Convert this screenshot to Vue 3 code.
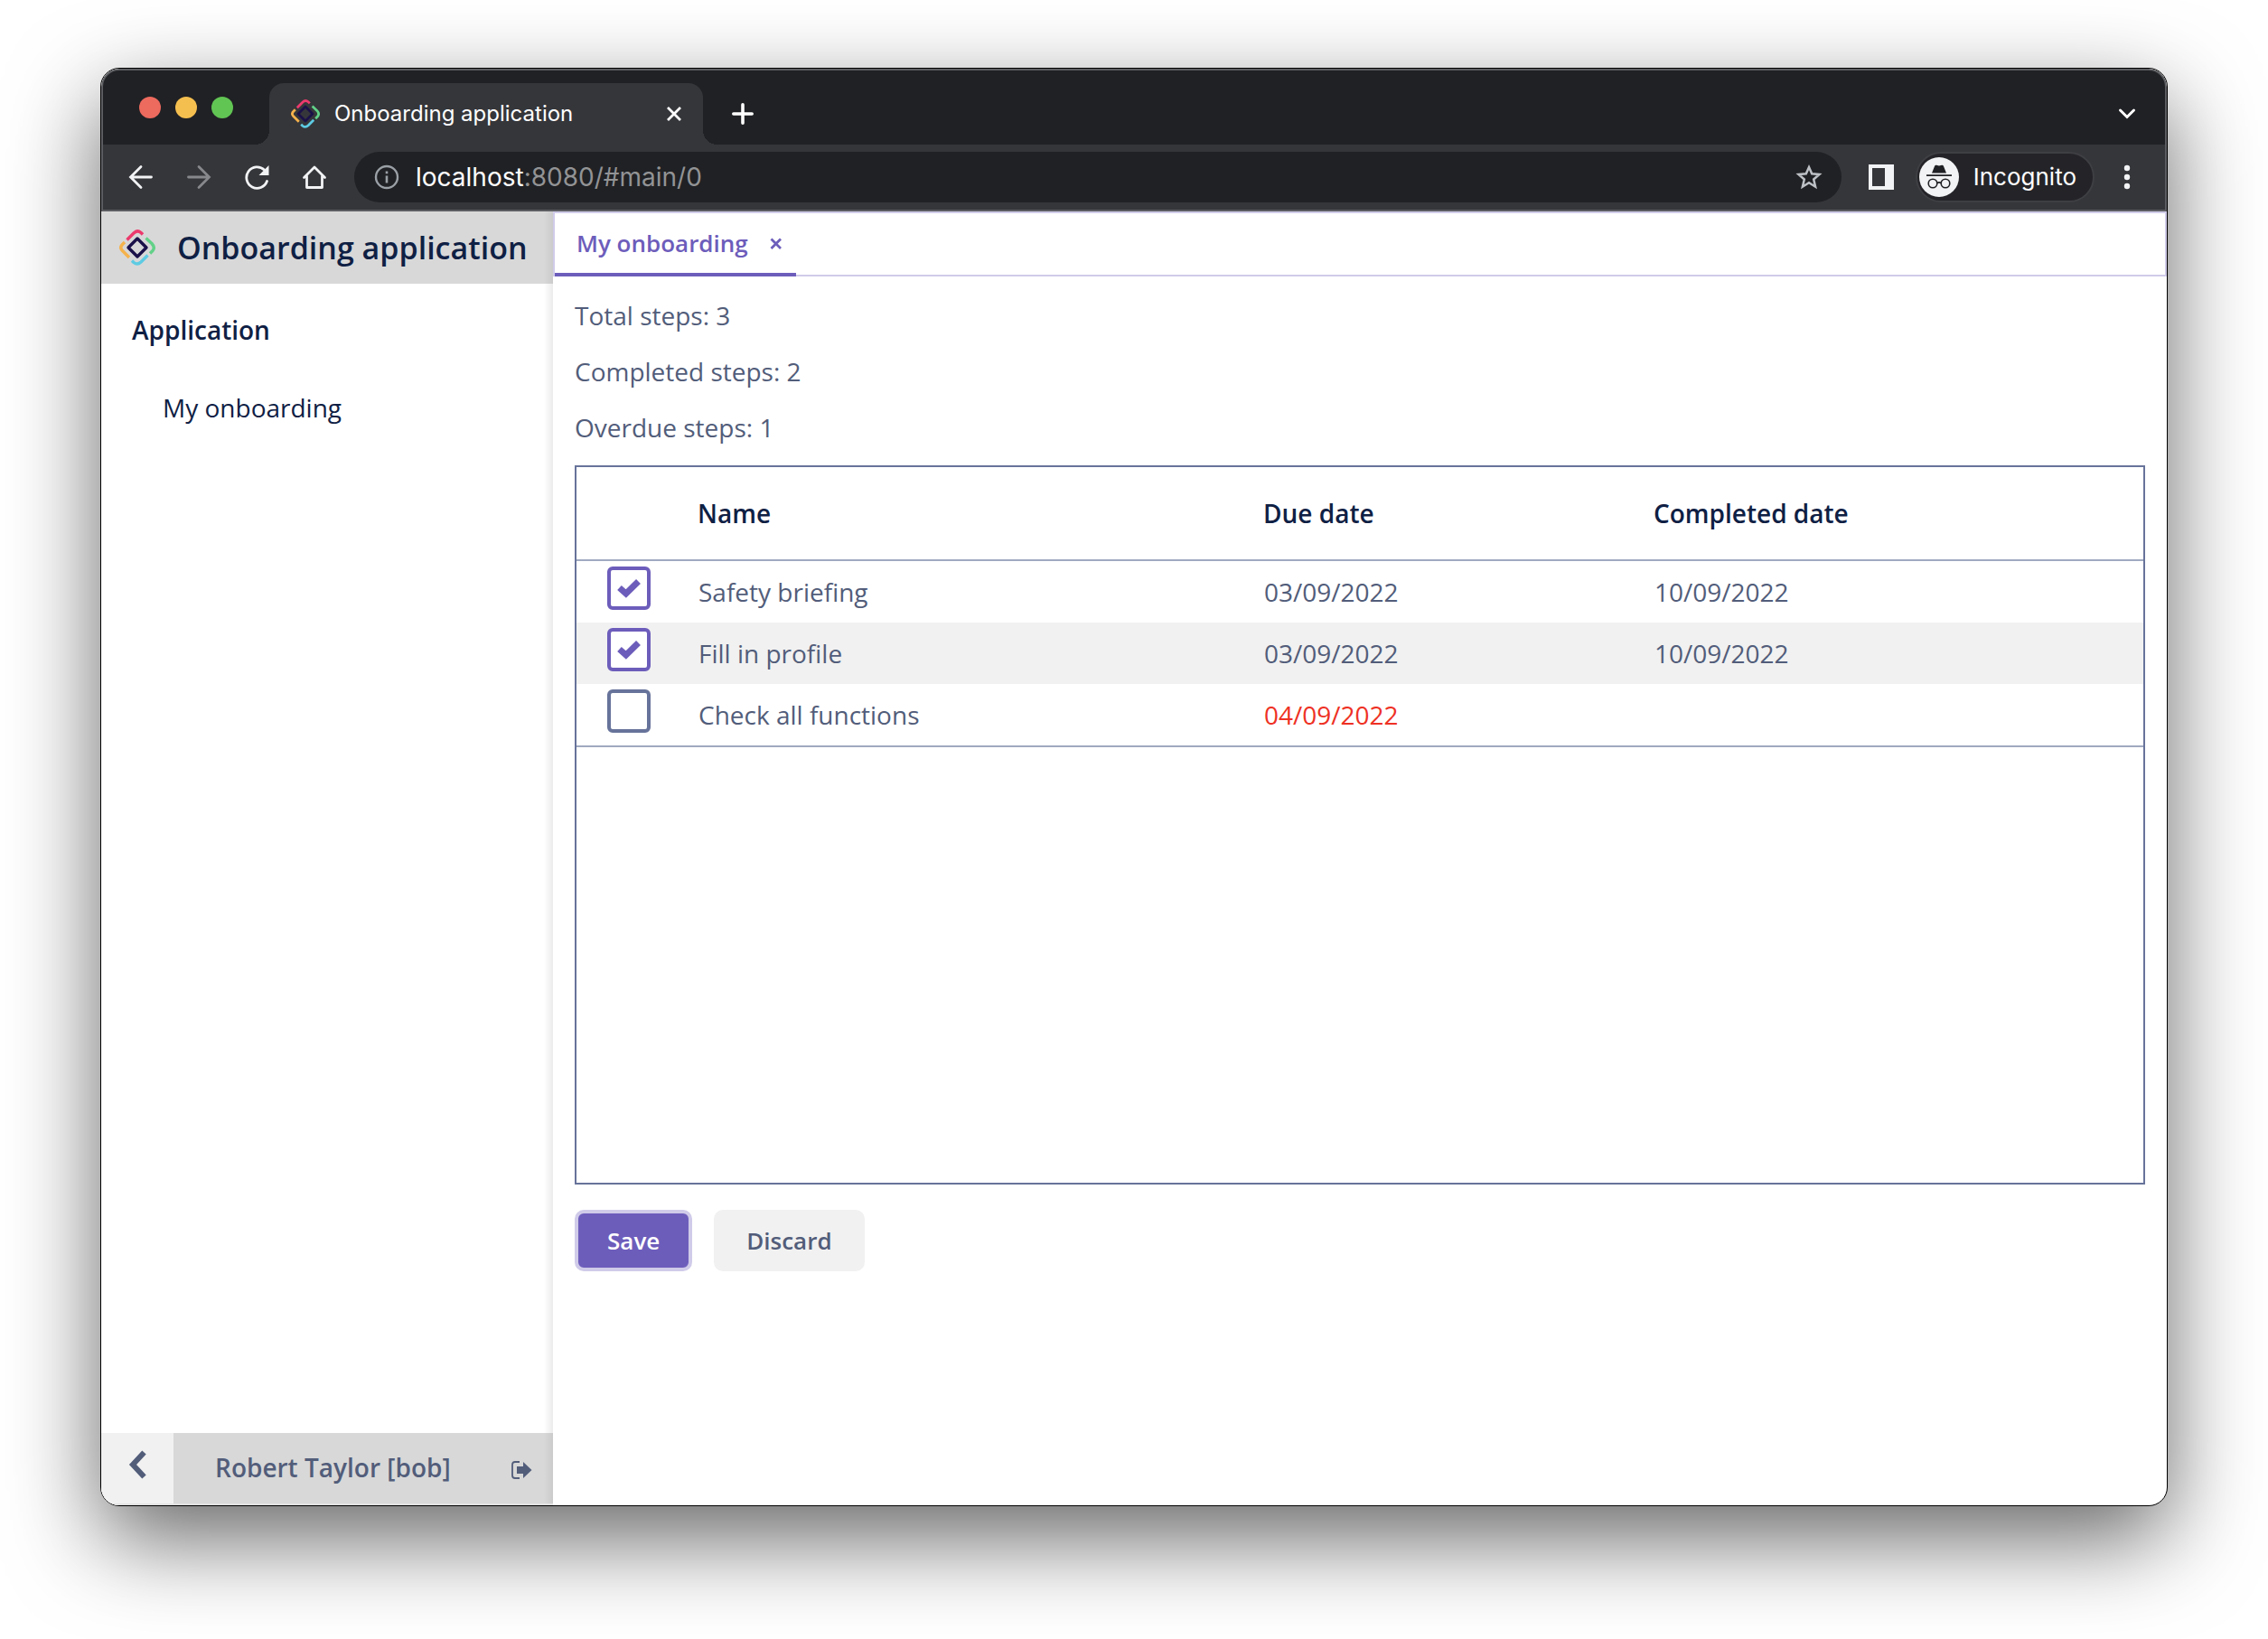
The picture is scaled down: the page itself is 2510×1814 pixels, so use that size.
<script setup>
import { ref } from 'vue'

const steps = ref([
  { name: 'Safety briefing', due: '03/09/2022', completed: '10/09/2022', done: true },
  { name: 'Fill in profile', due: '03/09/2022', completed: '10/09/2022', done: true },
  { name: 'Check all functions', due: '04/09/2022', completed: '', done: false, overdue: true },
])

// Strokes of the application logo, used in the browser tab and in the sidebar.
const logoStrokes = [
  { color: '#ec3a6d', d: 'M8.5 11.5 L16 4 Q20 0 24 3.5 L26 5.5' },
  { color: '#62d188', d: 'M29.5 9.5 L36 15.5 Q40 20 37 23.5 L34 26.5' },
  { color: '#5dcbe3', d: 'M31.5 28.5 L24 36 Q20 39.800 16 36.500 L14 34.5' },
  { color: '#f5b24c', d: 'M6 14 L3.5 16.5 Q0 20 3.500 23.500 L11 31' },
  { color: '#1b1149', d: 'M20 10 L30 20 L20 30 L10 20 Z' },
]
</script>

<template>
  <div class="desktop">
    <div class="window">
      <header class="chrome">
        <div class="tabstrip">
          <div class="lights">
            <span class="light red"></span>
            <span class="light yellow"></span>
            <span class="light green"></span>
          </div>
          <div class="browser-tab">
            <svg class="favicon" viewBox="0 0 40 40" aria-hidden="true">
              <g fill="none" stroke-width="3.4" stroke-linejoin="round">
                <path v-for="s in logoStrokes" :key="s.color" :stroke="s.color" :d="s.d" />
              </g>
            </svg>
            <span>Onboarding application</span>
            <button class="icon-button tab-close" aria-label="Close tab">
              <svg width="18" height="18" viewBox="0 0 18 18"><path d="M2 2 L16 16 M16 2 L2 16" stroke="#fff" stroke-width="2.8" /></svg>
            </button>
          </div>
          <button class="icon-button new-tab" aria-label="New tab">
            <svg width="24" height="24" viewBox="0 0 24 24"><path d="M12 1.8 V22.2 M1.8 12 H22.2" stroke="#fff" stroke-width="3.6" stroke-linecap="round" /></svg>
          </button>
          <button class="icon-button tab-search" aria-label="Search tabs">
            <svg width="20" height="14" viewBox="0 0 20 14"><path d="M2.5 3 L10 10.5 L17.5 3" fill="none" stroke="#fff" stroke-width="3" stroke-linecap="round" /></svg>
          </button>
        </div>

        <div class="toolbar">
          <div class="nav">
            <button class="icon-button" aria-label="Back">
              <svg width="28" height="28" viewBox="0 0 28 28"><path d="M25.5 14 H3 M14 2.5 L2.5 14 L14 25.5" fill="none" stroke="#f1f3f4" stroke-width="2.8" stroke-linecap="round" /></svg>
            </button>
            <button class="icon-button" aria-label="Forward">
              <svg width="28" height="28" viewBox="0 0 28 28"><path d="M2.500 14 H25 M14 2.5 L25.5 14 L14 25.5" fill="none" stroke="#87888b" stroke-width="2.8" stroke-linecap="round" /></svg>
            </button>
            <button class="icon-button" aria-label="Reload">
              <svg width="28" height="28" viewBox="0 0 28 28"><path d="M25.5 18.5 A11.700 11.700 0 1 1 22.500 6" fill="none" stroke="#f1f3f4" stroke-width="2.800" stroke-linecap="round" /><path d="M27.500 1 V12 H16.500 Z" fill="#f1f3f4" /></svg>
            </button>
            <button class="icon-button" aria-label="Home">
              <svg width="28" height="28" viewBox="0 0 28 28"><path d="M2.500 14.5 L14 3 L25.5 14.5 M5.500 13 V25.500 H22.500 V13" fill="none" stroke="#f1f3f4" stroke-width="2.800" stroke-linecap="round" stroke-linejoin="round" /></svg>
            </button>
          </div>
          <div class="address">
            <svg width="28" height="28" viewBox="0 0 28 28" aria-hidden="true">
              <circle cx="14" cy="14" r="12" fill="none" stroke="#9aa0a6" stroke-width="2.4" />
              <path d="M14 12.5 V20.5 M14 7.5 V10.2" stroke="#9aa0a6" stroke-width="2.6" />
            </svg>
            <a class="url" href="#main/0">localhost<span class="url-rest">:8080/#main/0</span></a>
            <button class="icon-button" aria-label="Bookmark this tab">
              <svg width="30" height="30" viewBox="0 0 30 30"><path d="M15 4 L18.2 11.3 L26.5 12 L20.2 17.5 L22.1 25.7 L15 21.3 L7.900 25.7 L9.800 17.5 L3.5 12 L11.8 11.3 Z" fill="none" stroke="#bdc1c6" stroke-width="2.5" /></svg>
            </button>
          </div>
          <button class="icon-button side-panel" aria-label="Side panel">
            <svg width="28" height="28" viewBox="0 0 28 28"><path fill="#f1f3f4" fill-rule="evenodd" d="M0 0 H28 V28 H0 Z M4 4 V24 H18 V4 Z" /></svg>
          </button>
          <button class="incognito">
            <svg width="44" height="44" viewBox="0 0 44 44" aria-hidden="true">
              <circle cx="22" cy="22" r="22" fill="#f1f3f4" />
              <path fill="#202124" d="M14 17.500 L17 10 Q17.700 8.300 19 8.800 L22 9.600 L25 8.800 Q26.300 8.300 27 10 L30 17.500 Z M8 19.200 H36 V21 H8 Z" />
              <g fill="none" stroke="#202124" stroke-width="1.6"><circle cx="15" cy="29" r="4.800" /><circle cx="29" cy="29" r="4.800" /><path d="M19.800 28.500 Q22 27.200 24.200 28.500" /></g>
            </svg>
            <span>Incognito</span>
          </button>
          <button class="icon-button" aria-label="Menu">
            <svg width="8" height="28" viewBox="0 0 8 28"><g fill="#f1f3f4"><circle cx="4" cy="4" r="3.2" /><circle cx="4" cy="14" r="3.2" /><circle cx="4" cy="24" r="3.2" /></g></svg>
          </button>
        </div>
      </header>

      <div class="app">
        <aside class="sidebar">
          <header class="brand">
            <svg class="logo" viewBox="0 0 40 40" aria-hidden="true">
              <g fill="none" stroke-width="3.4" stroke-linejoin="round">
                <path v-for="s in logoStrokes" :key="s.color" :stroke="s.color" :d="s.d" />
              </g>
            </svg>
            <h1>Onboarding application</h1>
          </header>
          <nav class="menu">
            <h2>Application</h2>
            <a href="#main/0">My onboarding</a>
          </nav>
          <footer class="user">
            <button class="collapse" aria-label="Collapse menu">
              <svg width="22" height="34" viewBox="0 0 22 34"><path d="M17.500 3.500 L5 17 L17.500 30.500" fill="none" stroke="#525d7a" stroke-width="6" /></svg>
            </button>
            <span class="user-name">Robert Taylor [bob]</span>
            <button class="icon-button logout" aria-label="Log out">
              <svg width="24" height="22" viewBox="0 0 24 22"><path d="M10 2 H5 Q2 2 2 5 V17 Q2 20 5 20 H10" fill="none" stroke="#525d7a" stroke-width="1.8" /><path fill="#525d7a" d="M7 7 H14 V2 L23.500 11 L14 20 V15 H7 Z" /></svg>
            </button>
          </footer>
        </aside>

        <main class="content">
          <div class="tabs">
            <div class="tab">
              <a href="#main/0/my-onboarding">My onboarding</a>
              <button class="icon-button" aria-label="Close My onboarding">
                <svg width="14" height="16" viewBox="0 0 14 16"><path d="M1.500 3.500 L12 14 M12 3.500 L1.500 14" stroke="#6d5dbb" stroke-width="2.800" /></svg>
              </button>
            </div>
          </div>
          <div class="view">
            <p>Total steps: 3</p>
            <p>Completed steps: 2</p>
            <p>Overdue steps: 1</p>
            <div class="grid">
              <table>
                <colgroup>
                  <col class="col-check" />
                  <col class="col-name" />
                  <col class="col-due" />
                  <col />
                </colgroup>
                <thead>
                  <tr>
                    <th></th>
                    <th>Name</th>
                    <th>Due date</th>
                    <th>Completed date</th>
                  </tr>
                </thead>
                <tbody>
                  <tr v-for="step in steps" :key="step.name">
                    <td class="check-cell">
                      <label class="check">
                        <input v-model="step.done" type="checkbox" :aria-label="step.name" />
                        <svg v-if="step.done" viewBox="0 0 28 22" aria-hidden="true"><path d="M3.500 10.500 L10.800 17 L24.500 3.500" fill="none" stroke="#6d5dbb" stroke-width="7" /></svg>
                      </label>
                    </td>
                    <td>{{ step.name }}</td>
                    <td :class="{ overdue: step.overdue }">{{ step.due }}</td>
                    <td>{{ step.completed }}</td>
                  </tr>
                </tbody>
              </table>
            </div>
            <div class="actions">
              <button class="btn primary">Save</button>
              <button class="btn">Discard</button>
            </div>
          </div>
        </main>
      </div>
    </div>
  </div>
</template>

<style>
body {
  margin: 0;
  background: #fff;
}
</style>

<style scoped>
* {
  box-sizing: border-box;
}
.desktop {
  display: flex;
  min-height: 100vh;
  padding: 75px 111px 147px;
  overflow: hidden;
  font-family: "Open Sans", sans-serif;
  font-size: 28px;
  line-height: 40px;
  color: #525d7a;
}
button {
  padding: 0;
  border: 0;
  background: none;
  font: inherit;
  color: inherit;
}
a {
  color: inherit;
  text-decoration: none;
}
.icon-button {
  display: flex;
}
.window {
  display: flex;
  flex: 1;
  flex-direction: column;
  overflow: hidden;
  border: 1px solid #000;
  border-radius: 21px;
  background: #fff;
  box-shadow: 0 36px 100px rgba(0, 0, 0, 0.6);
}
.chrome {
  border: 2px solid #5c5d61;
  border-radius: 20px 20px 0 0;
  background: #202124;
  font-family: Inter, sans-serif;
  color: #fff;
}
.tabstrip {
  display: flex;
  align-items: center;
  height: 82px;
  padding-right: 32px;
}
.lights {
  display: flex;
  gap: 16px;
  width: 184px;
  padding-left: 40px;
}
.light {
  width: 24px;
  height: 24px;
  border-radius: 12px;
}
.red { background: #ed6a5e; }
.yellow { background: #f5bf4f; }
.green { background: #61c554; }
.browser-tab {
  position: relative;
  display: flex;
  align-items: center;
  align-self: flex-end;
  width: 480px;
  height: 68px;
  padding: 0 23px 0 24px;
  border-radius: 16px 16px 0 0;
  background: #35363a;
  font-size: 24px;
}
.browser-tab::before,
.browser-tab::after {
  content: "";
  position: absolute;
  bottom: 0;
  width: 16px;
  height: 16px;
}
.browser-tab::before {
  left: -16px;
  background: radial-gradient(circle at 0 0, transparent 16px, #35363a 16px);
}
.browser-tab::after {
  right: -16px;
  background: radial-gradient(circle at 100% 0, transparent 16px, #35363a 16px);
}
.favicon {
  width: 32px;
  height: 32px;
  margin-right: 16px;
}
.tab-close {
  margin-left: auto;
}
.new-tab {
  margin: 14px 0 0 32px;
}
.tab-search {
  margin: 14px 0 0 auto;
}
.toolbar {
  display: flex;
  align-items: center;
  height: 72px;
  padding: 0 38px 0 28px;
  background: #35363a;
}
.nav {
  display: flex;
  gap: 36px;
  margin-right: 30px;
}
.address {
  display: flex;
  flex: 1;
  align-items: center;
  height: 56px;
  padding: 0 21px 0 22px;
  border-radius: 28px;
  background: #202124;
}
.url {
  flex: 1;
  margin-left: 18px;
}
.url-rest {
  color: #929395;
}
.side-panel {
  margin: 0 24px 0 30px;
}
.incognito {
  display: flex;
  align-items: center;
  gap: 16px;
  height: 56px;
  margin-right: 32px;
  padding: 0 18px 0 2px;
  border: 2px solid #3e3f43;
  border-radius: 28px;
  background: #242428;
  font-size: 26px;
}
.app {
  display: flex;
  flex: 1;
}
.sidebar {
  display: flex;
  flex-direction: column;
  width: 500px;
  color: #0f2044;
  background: linear-gradient(to left, #ebebeb, #fff 10px);
}
.brand {
  display: flex;
  align-items: center;
  gap: 24px;
  height: 80px;
  padding-left: 20px;
  background: linear-gradient(to left, #cbcbcb, #d8d8d8 10px);
}
.logo {
  width: 40px;
  height: 40px;
}
h1,
h2 {
  margin: 0;
  font-weight: 600;
}
h1 {
  font-size: 34px;
}
h2 {
  font-size: 28px;
  line-height: 40px;
}
.menu {
  display: flex;
  flex: 1;
  flex-direction: column;
  gap: 46px;
  padding: 31px 34px;
}
.menu a {
  padding-left: 34px;
}
.user {
  display: flex;
  align-items: center;
  height: 80px;
  border-bottom: 2px solid #e2e2e2;
  background: linear-gradient(to left, #cbcbcb, #d8d8d8 10px);
  color: #525d7a;
}
.collapse {
  display: flex;
  align-items: center;
  justify-content: center;
  width: 80px;
  height: 78px;
  padding: 0 0 8px 2px;
  background: #f1f1f1;
}
.user-name {
  margin-left: 46px;
  padding-bottom: 2px;
  font-weight: 600;
}
.logout {
  margin: 4px 23px 0 auto;
}
.content {
  display: flex;
  flex: 1;
  flex-direction: column;
}
.tabs {
  display: flex;
  height: 72px;
  border: 2px solid #d0cbe9;
}
.tab {
  display: flex;
  align-items: center;
  gap: 24px;
  height: 70px;
  padding: 0 15px 0 24px;
  border-bottom: 4px solid #6d5dbb;
  font-size: 26px;
  font-weight: 600;
  color: #6d5dbb;
}
.view {
  padding: 23px 24px 0;
}
p {
  margin: 0 0 22px;
}
.grid {
  height: 796px;
  border: 2px solid #67739a;
}
table {
  width: 100%;
  table-layout: fixed;
  border-spacing: 0;
}
.col-check { width: 120px; }
.col-name { width: 626px; }
.col-due { width: 432px; }
th,
td {
  padding: 0 14px;
  text-align: left;
}
th {
  height: 104px;
  border-bottom: 2px solid #a0a9c0;
  font-weight: 600;
  color: #0f2044;
}
td {
  height: 68px;
  padding: 0 15px;
}
tbody tr:nth-child(even) {
  background: #f1f1f1;
}
tbody tr:last-child td {
  height: 70px;
  border-bottom: 2px solid #a0a9c0;
}
.overdue {
  color: #ee3124;
}
.check-cell {
  padding: 0 0 8px 34px;
}
.check {
  position: relative;
  display: flex;
  width: 48px;
}
.check input {
  width: 48px;
  height: 48px;
  margin: 0;
  appearance: none;
  border: 4px solid #67739a;
  border-radius: 6px;
  background: #fff;
}
.check input:checked {
  border-color: #6d5dbb;
}
.check svg {
  position: absolute;
  top: 13px;
  left: 10px;
  width: 28px;
}
.actions {
  display: flex;
  gap: 24px;
  margin-top: 28px;
}
.btn {
  height: 68px;
  padding: 0 36px;
  border-radius: 10px;
  background: #f1f1f1;
  font-size: 26px;
  font-weight: 600;
}
.primary {
  border: 4px solid #d0cbe9;
  padding: 0 32px;
  background: #6d5dbb;
  color: #fff;
}
</style>
